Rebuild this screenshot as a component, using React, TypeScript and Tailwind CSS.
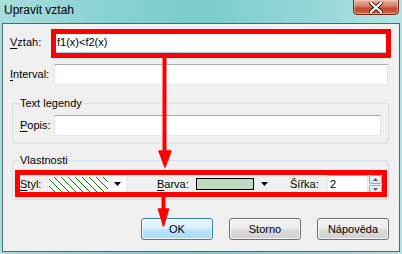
import type { ReactNode } from 'react';

function Underlined({ first, rest }: { first: string; rest: string }) {
  return (
    <span>
      <span className="underline underline-offset-[2px]">{first}</span>
      {rest}
    </span>
  );
}

function TextBox({ value, focused, width }: { value?: string; focused?: boolean; width: string }) {
  return (
    <div
      className={`${width} h-[21px] bg-white border flex items-center px-[2px] ${
        focused
          ? 'border-[#a4c9e3] border-t-[#3d7bad]'
          : 'border-[#e2e3ea] border-t-[#abadb3] border-b-[#e3e9ef]'
      }`}
    >
      <span className="text-black">{value}</span>
    </div>
  );
}

function ComboArrow() {
  return (
    <svg width="7" height="4" viewBox="0 0 7 4" className="shrink-0">
      <polygon points="0,0 7,0 3.5,4" fill="#000" />
    </svg>
  );
}

function Hatch() {
  const lines = [];
  for (let x = -16; x < 60; x += 7) {
    lines.push(<line key={x} x1={x} y1={0} x2={x + 15} y2={15} stroke="#008000" strokeWidth="1" />);
  }
  return (
    <svg width="59" height="15" viewBox="0 0 59 15" className="shrink-0">
      {lines}
    </svg>
  );
}

function Button({ children, primary }: { children: ReactNode; primary?: boolean }) {
  return (
    <div
      className={`w-[72px] h-[22px] rounded-[3px] border flex items-center justify-center shadow-[inset_0_0_0_1px_rgba(255,255,255,0.8)] ${
        primary
          ? 'border-[#3c7fb1] bg-[linear-gradient(180deg,#eaf6fd_0%,#d9f0fc_50%,#bee6fd_51%,#a7d9f5_100%)]'
          : 'border-[#707070] bg-[linear-gradient(180deg,#f2f2f2_0%,#ebebeb_50%,#dddddd_51%,#cfcfcf_100%)]'
      }`}
    >
      {children}
    </div>
  );
}

function CloseButton() {
  return (
    <div className="w-[46px] h-[16px] -mt-[1px] mr-[3px] rounded-b-[4px] border border-[#6a2c20] bg-[linear-gradient(180deg,#eab1a2_0%,#d98571_40%,#c24a30_60%,#d4623f_100%)] shadow-[inset_0_0_0_1px_rgba(255,210,190,0.5)] flex items-center justify-center">
      <svg width="14" height="11" viewBox="0 0 14 11">
        <path d="M2 1 L12 10 M12 1 L2 10" stroke="#3b1a12" strokeWidth="4" strokeLinecap="square" />
        <path d="M2 1 L12 10 M12 1 L2 10" stroke="#ffffff" strokeWidth="2.2" strokeLinecap="square" />
      </svg>
    </div>
  );
}

function SpinButtons() {
  return (
    <div className="w-[13px] h-[19px] ml-[1px] flex flex-col gap-[1px]">
      {[0, 1].map((i) => (
        <div
          key={i}
          className="flex-1 border border-[#9aa6b6] rounded-[2px] bg-[linear-gradient(180deg,#f4f6f9_0%,#dfe4ec_100%)] flex items-center justify-center"
        >
          <svg width="5" height="3" viewBox="0 0 5 3">
            <polygon points={i === 0 ? '0,3 5,3 2.5,0' : '0,0 5,0 2.5,3'} fill="#4c5e85" />
          </svg>
        </div>
      ))}
    </div>
  );
}

function Annotations() {
  return (
    <svg className="absolute inset-0 pointer-events-none" width="402" height="254" viewBox="0 0 402 254">
      <rect x="53.5" y="31.5" width="335" height="24" fill="none" stroke="#ff0000" strokeWidth="5" />
      <rect x="17.5" y="172.5" width="367" height="22" fill="none" stroke="#ff0000" strokeWidth="5" />
      <rect x="162.5" y="56" width="4" height="98" fill="#ff0000" />
      <polygon points="159,151 171,151 165,167" fill="#ff0000" stroke="#ff0000" strokeWidth="1.5" strokeLinejoin="round" />
      <rect x="161.5" y="196" width="4" height="16" fill="#ff0000" />
      <polygon points="158.5,209 168.5,209 163.5,226" fill="#ff0000" stroke="#ff0000" strokeWidth="1.5" strokeLinejoin="round" />
    </svg>
  );
}

export default function App() {
  return (
    <div className="relative w-[402px] h-[254px] overflow-hidden flex flex-col font-['Liberation_Sans',Arial,sans-serif] bg-[linear-gradient(90deg,#a9dddd_0%,#8ad2d3_25%,#7bcccd_50%,#96d6d7_78%,#b6e4e4_100%)]">
      <div className="h-[23px] shrink-0 flex items-start justify-between">
        <span className="pl-[4px] pt-[3px] text-[12px] leading-[14px] text-black">Upravit vztah</span>
        <CloseButton />
      </div>

      <div className="mx-[2px] mb-[2px] flex-1 border border-[#4d6a6c] bg-[#f0f0f0] flex flex-col text-[11px] leading-[13px] text-black">
        <div className="flex items-center pt-[8px] pl-[7px]">
          <span className="w-[44px]">
            <Underlined first="V" rest="ztah:" />
          </span>
          <TextBox value="f1(x)<f2(x)" focused width="w-[334px]" />
        </div>

        <div className="flex items-center mt-[11px] pl-[7px]">
          <span className="w-[44px]">
            <Underlined first="I" rest="nterval:" />
          </span>
          <TextBox width="w-[334px]" />
        </div>

        <fieldset className="ml-[9px] mt-[12px] w-[377px] border border-[#d5dfe5] rounded-[3px] pl-[7px] pt-[5px] pb-[7px]">
          <legend className="px-[1px] -ml-[1px]">Text legendy</legend>
          <div className="flex items-center">
            <span className="w-[34px]">
              <Underlined first="P" rest="opis:" />
            </span>
            <TextBox width="w-[327px]" />
          </div>
        </fieldset>

        <fieldset className="ml-[9px] mt-[10px] w-[377px] border border-[#d5dfe5] rounded-[3px] pl-[7px] pt-[7px] pb-[5px]">
          <legend className="px-[1px] -ml-[1px]">Vlastnosti</legend>
          <div className="flex items-center h-[20px]">
            <span className="w-[27px]">
              <Underlined first="S" rest="tyl:" />
            </span>
            <div className="w-[80px] h-[19px] bg-white border border-[#e3e9ef] flex items-center pl-[1px] pr-[5px] justify-between">
              <Hatch />
              <ComboArrow />
            </div>
            <span className="w-[37px] ml-[30px]">
              <Underlined first="B" rest="arva:" />
            </span>
            <div className="w-[78px] h-[19px] flex items-center pl-[2px] pr-[4px] justify-between">
              <div className="w-[58px] h-[12px] border border-black bg-[#c0dcc0]" />
              <ComboArrow />
            </div>
            <span className="w-[37px] ml-[18px]">Šířka:</span>
            <div className="w-[41px] h-[19px] bg-white border border-[#e2e3ea] border-t-[#abadb3] flex items-center px-[2px]">
              2
            </div>
            <SpinButtons />
          </div>
        </fieldset>

        <div className="flex justify-end gap-[16px] mt-[18px] pr-[10px]">
          <Button primary>OK</Button>
          <Button>Storno</Button>
          <Button>Nápověda</Button>
        </div>
      </div>

      <Annotations />
    </div>
  );
}
